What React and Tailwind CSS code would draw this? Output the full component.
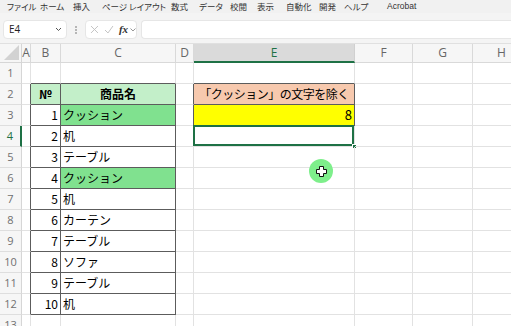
import React from 'react';

const JP = { fontFamily: '"Noto Sans CJK JP", "Noto Sans", sans-serif' };

const COLS = [
  { key: 'A', w: 'w-[9px]' },
  { key: 'B', w: 'w-[30px]' },
  { key: 'C', w: 'w-[115px]' },
  { key: 'D', w: 'w-[18px]' },
  { key: 'E', w: 'w-[161px]' },
  { key: 'F', w: 'w-[58px]' },
  { key: 'G', w: 'w-[60px]' },
  { key: 'H', w: 'w-[58px]' },
];

const items = [
  [1, 'クッション', true],
  [2, '机'],
  [3, 'テーブル'],
  [4, 'クッション', true],
  [5, '机'],
  [6, 'カーテン'],
  [7, 'テーブル'],
  [8, 'ソファ'],
  [9, 'テーブル'],
  [10, '机'],
];

const menus = [
  ['ファイル', 'w-[33px]'],
  ['ホーム', 'w-[33px]'],
  ['挿入', 'w-[29px]'],
  ['ページ レイアウト', 'w-[69px]'],
  ['数式', 'w-[28px]'],
  ['データ', 'w-[31px]'],
  ['校閲', 'w-[27px]'],
  ['表示', 'w-[29px]'],
  ['自動化', 'w-[33px]'],
  ['開発', 'w-[25px]'],
  ['ヘルプ', 'w-[43px]'],
  ['Acrobat', 'w-[40px]'],
];

// which cells sit on the table edges (dark border on right / bottom)
function cellInfo(row, col) {
  const info = { text: '', align: 'left', bg: '', bold: false, r: false, b: false, extra: '' };
  const inTable = row >= 2 && row <= 12;
  if (col === 'A' && inTable) info.r = true;
  if ((col === 'B' || col === 'C') && row === 1) info.b = true;
  if ((col === 'B' || col === 'C') && inTable) {
    info.r = true;
    info.b = true;
  }
  if (col === 'D' && (row === 2 || row === 3)) info.r = true;
  if (col === 'E' && row === 1) info.b = true;
  if (col === 'E' && (row === 2 || row === 3)) {
    info.r = true;
    info.b = true;
  }

  if (row === 2 && col === 'B') Object.assign(info, { text: '№', align: 'center', bg: 'bg-[#c3efc9]', bold: true });
  if (row === 2 && col === 'C') Object.assign(info, { text: '商品名', align: 'center', bg: 'bg-[#c3efc9]', bold: true });
  if (row === 2 && col === 'E')
    Object.assign(info, { text: '「クッション」の文字を除く', align: 'center', bg: 'bg-[#f7c9ae]', extra: 'tracking-[-0.5px]' });
  if (row === 3 && col === 'E') Object.assign(info, { text: '8', align: 'right', bg: 'bg-[#ffff00]', extra: 'text-[13px]' });

  if (row >= 3 && row <= 12) {
    const it = items[row - 3];
    if (col === 'B') Object.assign(info, { text: String(it[0]), align: 'right' });
    if (col === 'C') Object.assign(info, { text: it[1], bg: it[2] ? 'bg-[#80e18f]' : '' });
  }
  return info;
}

const Cell = ({ row, col, w }) => {
  const c = cellInfo(row, col.key);
  const selected = row === 4 && col.key === 'E';
  return (
    <div
      className={`relative h-full shrink-0 ${w} border-r border-b ${c.r ? 'border-r-[#5c5c5c]' : 'border-r-[#e2e2e2]'} ${
        c.b ? 'border-b-[#5c5c5c]' : 'border-b-[#e2e2e2]'
      } ${c.bg} flex items-center px-[2px] text-[12px] text-black ${
        c.align === 'center' ? 'justify-center' : c.align === 'right' ? 'justify-end' : 'justify-start'
      } ${c.bold ? 'font-bold' : ''} ${c.extra} whitespace-nowrap`}
    >
      {c.text}
      {selected && (
        <>
          <div className="absolute -left-[1px] -top-[1px] right-0 bottom-0 border-2 border-[#1e7145]" />
          <div className="absolute -right-[3px] -bottom-[3px] w-[5px] h-[5px] bg-[#1e7145] border border-white" />
        </>
      )}
    </div>
  );
};

export default function App() {
  const rows = Array.from({ length: 13 }, (_, i) => i + 1);
  return (
    <div className="w-[511px] h-[326px] overflow-hidden bg-white relative" style={JP}>
      {/* ribbon tabs */}
      <div className="h-[13px] bg-[#f1f1f1] flex items-center pl-[7px] text-[8.5px] text-[#333] leading-none [font-feature-settings:'palt']">
        {menus.map(([m, w]) => (
          <span key={m} className={`${w} shrink-0 whitespace-nowrap`} style={m === 'Acrobat' ? { fontFamily: '"Liberation Sans", sans-serif' } : undefined}>
            {m}
          </span>
        ))}
      </div>

      {/* formula bar */}
      <div className="h-[30px] bg-[#f4f4f4] flex items-start pt-[7px] pl-[3px] pr-0 gap-[4px]">
        <div className="w-[64px] h-[19px] bg-white rounded-[4px] border border-[#e6e6e6] flex items-center justify-between pl-[5px] pr-[4px] text-[10px] text-[#222]" style={{ fontFamily: '"Open Sans", sans-serif' }}>
          <span>E4</span>
          <svg width="7" height="5" viewBox="0 0 7 5"><path d="M1 1l2.5 2.5L6 1" fill="none" stroke="#555" strokeWidth="1" /></svg>
        </div>
        <div className="w-[10px] h-[19px] flex items-center justify-center">
          <svg width="2" height="8" viewBox="0 0 2 8"><circle cx="1" cy="1" r="0.8" fill="#666" /><circle cx="1" cy="4" r="0.8" fill="#666" /><circle cx="1" cy="7" r="0.8" fill="#666" /></svg>
        </div>
        <div className="w-[52px] h-[19px] bg-white rounded-[4px] border border-[#e6e6e6] flex items-center pl-[4px] gap-[5px]">
          <svg width="9" height="9" viewBox="0 0 9 9"><path d="M1 1l7 7M8 1L1 8" stroke="#c4c4c4" strokeWidth="1" /></svg>
          <svg width="10" height="9" viewBox="0 0 10 9"><path d="M1 5l3 3 5-7" fill="none" stroke="#c4c4c4" strokeWidth="1" /></svg>
          <span className="text-[11px] italic font-bold text-[#333] leading-none" style={{ fontFamily: '"Liberation Serif", serif' }}>fx</span>
          <svg width="6" height="4" viewBox="0 0 6 4" className="-ml-[3px]"><path d="M0.5 0.5l2.5 2.5 2.5-2.5" fill="none" stroke="#888" strokeWidth="0.9" /></svg>
        </div>
        <div className="flex-1 h-[19px] bg-white rounded-l-[4px] border border-r-0 border-[#e6e6e6]" />
      </div>

      {/* sheet */}
      <div className="flex flex-col">
        <div className="flex h-[20px] bg-[#f6f6f6] border-t border-[#e0e0e0]">
          <div className="w-[22px] shrink-0 h-full border-r border-b border-[#d6d6d6] flex items-end justify-end p-[2px]">
            <svg width="15" height="15" viewBox="0 0 15 15"><path d="M15 0V15H0Z" fill="#d2d2d2" /></svg>
          </div>
          {COLS.map((col) =>
            col.key === 'E' ? (
              <div key={col.key} className={`${col.w} shrink-0 h-full bg-[#dadada] border-r border-[#d0d0d0] border-b-2 border-b-[#1e7145] flex items-center justify-center text-[12px] text-[#1e7145]`} style={{ fontFamily: '"Open Sans", sans-serif' }}>
                {col.key}
              </div>
            ) : (
              <div key={col.key} className={`${col.w} shrink-0 h-full border-r border-b border-[#d9d9d9] flex items-center justify-center text-[12px] text-[#666]`} style={{ fontFamily: '"Open Sans", sans-serif' }}>
                {col.key}
              </div>
            )
          )}
          <div className="flex-1 border-b border-[#d9d9d9]" />
        </div>

        {rows.map((row) => (
          <div key={row} className="flex h-[21px]">
            <div
              className={`w-[22px] shrink-0 h-full bg-[#f6f6f6] border-b border-[#dedede] flex items-center justify-center text-[11px] ${
                row === 4 ? 'bg-[#e4e4e4] border-r-2 border-r-[#1e7145] text-[#1e7145]' : 'border-r border-r-[#d6d6d6] text-[#6f6f6f]'
              }`}
              style={{ fontFamily: '"Open Sans", sans-serif' }}
            >
              {row}
            </div>
            {COLS.map((col) => (
              <Cell key={col.key} row={row} col={col} w={col.w} />
            ))}
          </div>
        ))}
      </div>

      {/* mouse cursor highlight */}
      <div className="absolute left-[309px] top-[159px] w-[24px] h-[24px] rounded-full bg-[#7eef8b] flex items-center justify-center">
        <svg width="11" height="11" viewBox="0 0 11 11">
          <path d="M3.5 0.5h4v3h3v4h-3v3h-4v-3h-3v-4h3z" fill="#fff" stroke="#111" strokeWidth="1" strokeLinejoin="round" />
        </svg>
      </div>
    </div>
  );
}
